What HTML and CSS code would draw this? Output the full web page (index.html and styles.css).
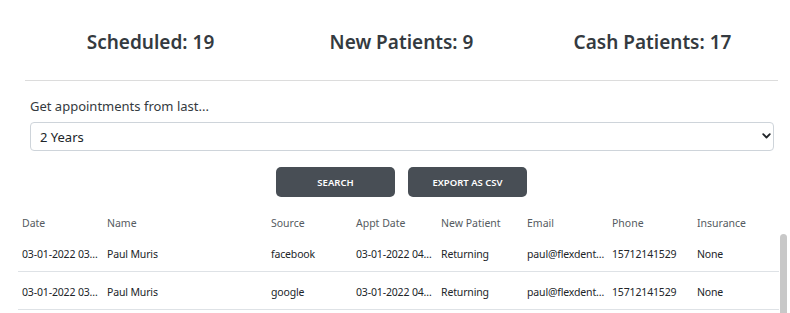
FILE: index.html
```html
<!DOCTYPE html>
<html lang="en">
<head>
    <meta charset="UTF-8">
    <meta name="viewport" content="width=device-width, initial-scale=1.0">
    <title>Appointments</title>
    <link rel="stylesheet" href="styles.css">
</head>
<body>

<div class="container">
    <div class="stats">
        <h2 class="stat">Scheduled: 19</h2>
        <h2 class="stat">New Patients: 9</h2>
        <h2 class="stat">Cash Patients: 17</h2>
    </div>

    <hr class="divider">

    <label class="range-label" for="range">Get appointments from last...</label>
    <div class="select-wrap">
        <select id="range" class="range-select">
            <option>1 Month</option>
            <option>6 Months</option>
            <option>1 Year</option>
            <option selected>2 Years</option>
        </select>
        <svg class="chevron" width="9" height="6" viewBox="0 0 9 6">
            <path d="M1.2 1.2l3.3 3.3 3.3-3.3" fill="none" stroke="#212529" stroke-width="1.8" stroke-linecap="round" stroke-linejoin="round"/>
        </svg>
    </div>

    <div class="controls">
        <button class="btn">Search</button>
        <button class="btn">Export as CSV</button>
    </div>
</div>

<div class="results">
    <table class="grid head">
        <colgroup>
            <col style="width:85px"><col style="width:164px"><col style="width:85px"><col style="width:85px">
            <col style="width:86px"><col style="width:85px"><col style="width:85px"><col style="width:86px">
        </colgroup>
        <thead>
            <tr>
                <th>Date</th>
                <th>Name</th>
                <th>Source</th>
                <th>Appt Date</th>
                <th>New Patient</th>
                <th>Email</th>
                <th>Phone</th>
                <th>Insurance</th>
            </tr>
        </thead>
    </table>
    <div class="scroll">
        <table class="grid body">
            <colgroup>
                <col style="width:85px"><col style="width:164px"><col style="width:85px"><col style="width:85px">
                <col style="width:86px"><col style="width:85px"><col style="width:85px"><col style="width:86px">
            </colgroup>
            <tbody>
                <tr>
                    <td>03-01-2022 03:12 PM</td>
                    <td>Paul Muris</td>
                    <td>facebook</td>
                    <td>03-01-2022 04:00 PM</td>
                    <td>Returning</td>
                    <td>paul@flexdental.com</td>
                    <td>15712141529</td>
                    <td>None</td>
                </tr>
                <tr>
                    <td>03-01-2022 03:20 PM</td>
                    <td>Paul Muris</td>
                    <td>google</td>
                    <td>03-01-2022 04:30 PM</td>
                    <td>Returning</td>
                    <td>paul@flexdental.com</td>
                    <td>15712141529</td>
                    <td>None</td>
                </tr>
                <tr>
                    <td>03-01-2022 03:41 PM</td>
                    <td>Paul Muris</td>
                    <td>website</td>
                    <td>03-02-2022 09:00 AM</td>
                    <td>New</td>
                    <td>paul@flexdental.com</td>
                    <td>15712141529</td>
                    <td>Cash</td>
                </tr>
                <tr>
                    <td>03-02-2022 10:05 AM</td>
                    <td>Paul Muris</td>
                    <td>facebook</td>
                    <td>03-02-2022 11:00 AM</td>
                    <td>Returning</td>
                    <td>paul@flexdental.com</td>
                    <td>15712141529</td>
                    <td>None</td>
                </tr>
            </tbody>
        </table>
        <div class="thumb"></div>
    </div>
</div>

</body>
</html>
```

FILE: styles.css
```css
body {
    font-family: 'Noto Sans', 'Open Sans', sans-serif;
    color: #212529;
    background: #fff;
    margin: 0;
    padding: 0;
    overflow: hidden;
}
.container {
    width: 753px;
    margin-left: 25px;
}
.stats {
    display: grid;
    grid-template-columns: repeat(3, 1fr);
    padding-top: 28px;
    padding-bottom: 24px;
}
.stat {
    margin: 0;
    text-align: center;
    font-size: 19px;
    font-weight: 600;
    line-height: 28px;
    color: #343a40;
}
.divider {
    margin: 0;
    border: none;
    border-top: 1px solid #dcdcdc;
}
.range-label {
    display: block;
    margin: 15px 0 0 5px;
    font-size: 13px;
    line-height: 20px;
    color: #343a40;
}
.select-wrap {
    position: relative;
    margin: 6px 4px 0 5px;
}
.range-select {
    -webkit-appearance: none;
    appearance: none;
    display: block;
    width: 100%;
    height: 29px;
    padding: 0 24px 0 9px;
    font-family: inherit;
    font-size: 13px;
    color: #212529;
    background: #fff;
    border: 1px solid #ced4da;
    border-radius: 4px;
}
.chevron {
    position: absolute;
    right: 3px;
    top: 11px;
    pointer-events: none;
}
.controls {
    display: flex;
    justify-content: center;
    gap: 13px;
    margin-top: 16px;
}
.btn {
    width: 119px;
    height: 30px;
    padding: 0;
    font-family: inherit;
    font-size: 9.5px;
    font-weight: 600;
    text-transform: uppercase;
    color: #fff;
    background-color: #484e55;
    border: none;
    border-radius: 5px;
    cursor: pointer;
}
.btn:hover {
    background-color: #3a3f44;
}
.results {
    margin-left: 18px;
    margin-top: 15px;
}
.grid {
    table-layout: fixed;
    width: 761px;
    border-collapse: collapse;
    font-size: 10.5px;
}
.grid th, .grid td {
    padding: 0 0 0 4px;
    text-align: left;
    white-space: nowrap;
    overflow: hidden;
    text-overflow: ellipsis;
}
.grid th {
    font-weight: 400;
    color: #555b61;
    height: 22px;
    line-height: 22px;
}
.grid td {
    height: 34px;
    padding: 3px 3px 0 4px;
    border-bottom: 1px solid #dee2e6;
    color: #212529;
    letter-spacing: -0.15px;
}
.scroll {
    position: relative;
    width: 769px;
    height: 90px;
    overflow: hidden;
}
.thumb {
    position: absolute;
    top: 0;
    right: 0;
    width: 7px;
    height: 100px;
    background: #c8c8c8;
    border-radius: 4px 4px 0 0;
}
```
